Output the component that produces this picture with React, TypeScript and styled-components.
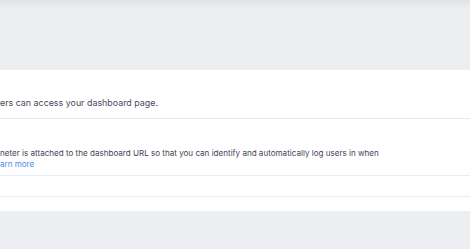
import React from 'react'
import styled, { createGlobalStyle } from 'styled-components'

const GlobalStyle = createGlobalStyle`
  html, body {
    margin: 0;
    padding: 0;
    background: #edeef1;
  }
  body {
    font-family: Inter, "Noto Sans", "Liberation Sans", sans-serif;
    -webkit-font-smoothing: antialiased;
  }
`

const App: React.FC = () => {
  return (
    <>
      <GlobalStyle />
      <Page>
        <HeaderShadow />
        <Card>
          <Row>
            <Description>ers can access your dashboard page.</Description>
          </Row>
          <Setting>
            <Hint>
              neter is attached to the dashboard URL so that you can identify
              and automatically log users in when
            </Hint>
            <LearnMore href="#">arn more</LearnMore>
          </Setting>
          <EmptyRow />
        </Card>
      </Page>
    </>
  )
}

export default App

const Page = styled.div`
  width: 470px;
  height: 249px;
  overflow: hidden;
  background: #edeef1;
`

const HeaderShadow = styled.div`
  height: 70px;
  background: linear-gradient(
    to bottom,
    #dfe0e4 0px,
    #e6e7ea 3px,
    #ebecef 7px,
    #edeef1 10px
  );
`

const Card = styled.section`
  background: #fff;
  display: flex;
  flex-direction: column;
  height: 141px;
`

const Row = styled.div`
  height: 49px;
  display: flex;
  align-items: flex-end;
  padding-bottom: 9px;
  box-sizing: border-box;
  border-bottom: 1px solid #e7e8eb;
`

const Description = styled.p`
  margin: 0;
  font-size: 8.9px;
  line-height: 12px;
  color: #474a58;
`

const Setting = styled.div`
  height: 57px;
  box-sizing: border-box;
  padding-top: 29px;
  display: flex;
  flex-direction: column;
  align-items: flex-start;
  border-bottom: 1px solid #e6eefb;
`

const Hint = styled.p`
  margin: 0;
  font-size: 8.07px;
  line-height: 11px;
  color: #434655;
  white-space: nowrap;
`

const LearnMore = styled.a`
  font-size: 8.07px;
  line-height: 11px;
  color: #4a8cf2;
  text-decoration: none;
`

const EmptyRow = styled.div`
  height: 20px;
  border-bottom: 1px solid #e6eefb;
`
